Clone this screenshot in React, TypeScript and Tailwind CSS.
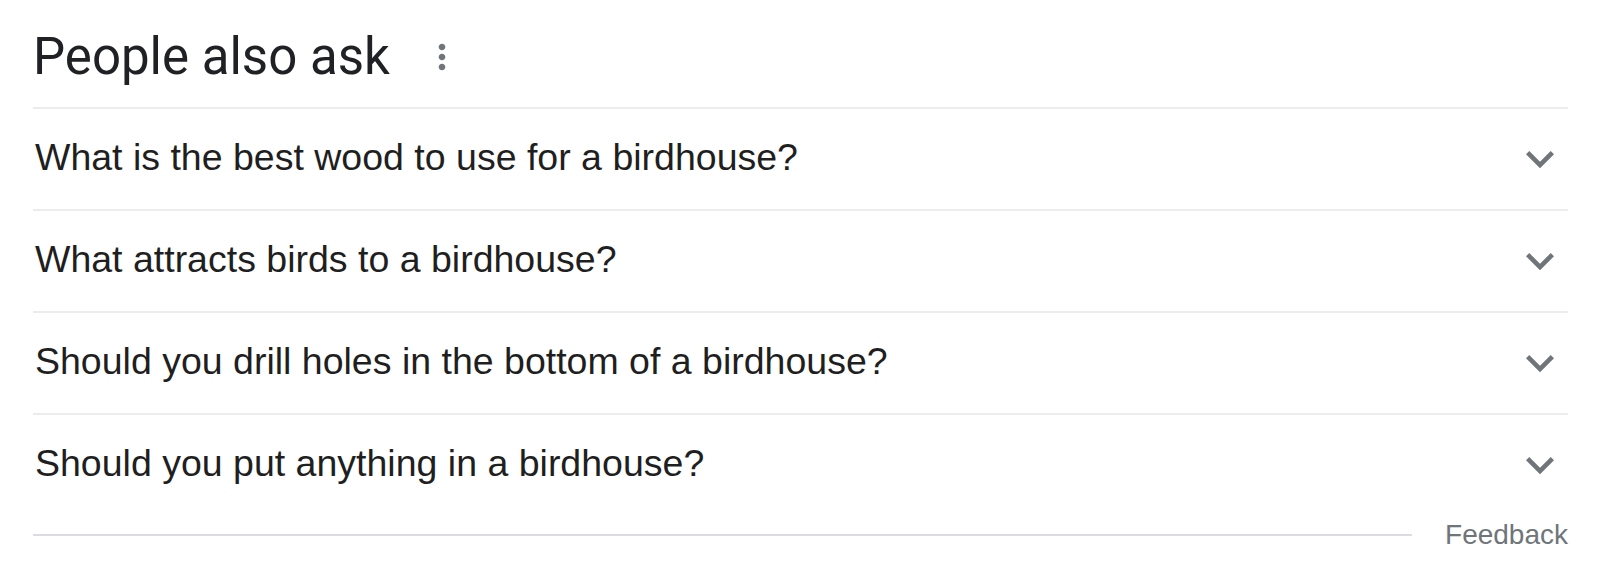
import React from "react";

const questions = [
  "What is the best wood to use for a birdhouse?",
  "What attracts birds to a birdhouse?",
  "Should you drill holes in the bottom of a birdhouse?",
  "Should you put anything in a birdhouse?",
];

function Chevron() {
  return (
    <svg width="56" height="56" viewBox="0 0 24 24" className="shrink-0">
      <path d="M16.59 8.59L12 13.17 7.41 8.59 6 10l6 6 6-6z" fill="#70757a" />
    </svg>
  );
}

function Kebab() {
  return (
    <svg width="40" height="40" viewBox="0 0 24 24" className="shrink-0">
      <path
        d="M12 8c1.1 0 2-.9 2-2s-.9-2-2-2-2 .9-2 2 .9 2 2 2zm0 2c-1.1 0-2 .9-2 2s.9 2 2 2 2-.9 2-2-.9-2-2-2zm0 6c-1.1 0-2 .9-2 2s.9 2 2 2 2-.9 2-2-.9-2-2-2z"
        fill="#70757a"
      />
    </svg>
  );
}

export default function App() {
  return (
    <div className="w-[1600px] h-[588px] bg-white pl-[33px] pr-[32px] font-['Liberation_Sans',Arial,sans-serif]">
      <div className="h-[109px] border-b-2 border-[#ececec] flex items-center pt-[6px]">
        <h2 className="font-['Roboto',sans-serif] text-[51px] leading-none text-[#202124] font-normal">
          People also ask
        </h2>
        <div className="ml-[32px]">
          <Kebab />
        </div>
      </div>
      {questions.map((q, i) => (
        <div
          key={q}
          className={
            i < questions.length - 1
              ? "h-[102px] border-b-2 border-[#ececec] flex items-center justify-between"
              : "h-[100px] flex items-center justify-between"
          }
        >
          <span className="pl-[2px] pb-[2px] text-[37.5px] leading-none text-[#1f1f1f]">{q}</span>
          <Chevron />
        </div>
      ))}
      <div className="h-[40px] flex items-center">
        <div className="flex-1 h-[2px] bg-[#dadce0]" />
        <span className="ml-[33px] text-[28px] leading-none text-[#70757a]">Feedback</span>
      </div>
    </div>
  );
}
